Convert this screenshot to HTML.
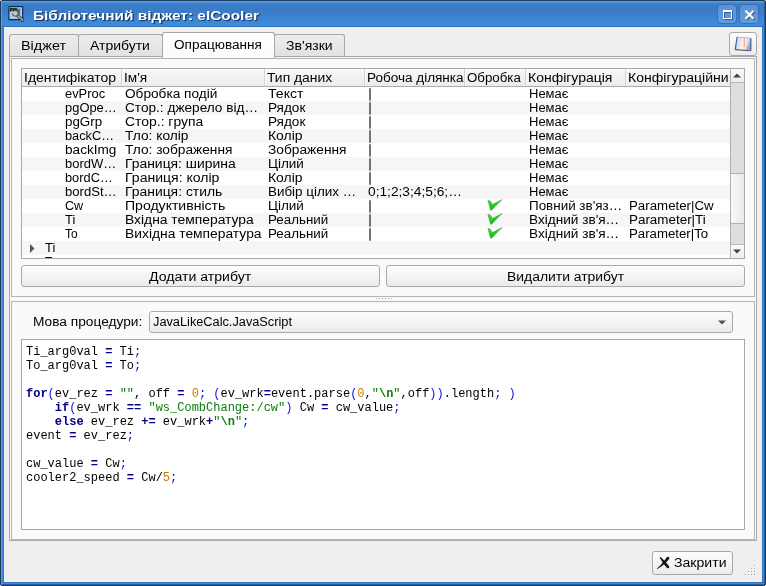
<!DOCTYPE html><html><head><meta charset="utf-8"><style>
html,body{margin:0;padding:0;width:766px;height:586px;overflow:hidden;background:#efefef}
div,span,svg{position:absolute}
.t{font-family:"Liberation Sans",sans-serif;will-change:transform}
.m{font-family:"Liberation Mono",monospace;font-size:12px;line-height:14px;white-space:pre;will-change:transform}
.m span{position:static}
</style></head><body>
<div style="left:0px;top:0px;width:766px;height:586px;background:#efefef"></div>
<div style="left:0px;top:0px;width:766px;height:27px;background:linear-gradient(#1a3a60 0,#1a3a60 1px,#5d9fe6 1px,#5d9fe6 2px,#4a8dd8 2px,#3a7bc6 5px,#3a7cc8 12px,#3e88d8 20px,#3f8ad9 26px,#2f72c0 26px,#2f72c0 27px)"></div>
<div style="left:0px;top:0px;width:4px;height:586px;background:linear-gradient(90deg,#1a3a60 0,#1a3a60 1px,#5c9de6 1px,#5c9de6 2px,transparent 2px)"></div>
<div style="left:2px;top:27px;width:2px;height:556px;background:linear-gradient(90deg,#3b86d9 0,#3b86d9 1px,#3079c9 1px)"></div>
<div style="left:762px;top:0px;width:4px;height:586px;background:linear-gradient(90deg,transparent 0,transparent 2px,#2a5c98 2px,#2a5c98 3px,#1a3a60 3px)"></div>
<div style="left:762px;top:27px;width:2px;height:556px;background:linear-gradient(90deg,#2f78c8 0,#2f78c8 1px,#3e8ee0 1px)"></div>
<div style="left:2px;top:582px;width:762px;height:3px;background:linear-gradient(#2f78c8 0,#2f78c8 1px,#3e8ee0 1px,#3e8ee0 2px,#2a5c98 2px)"></div>
<div style="left:0px;top:585px;width:766px;height:1px;background:#1a3a60"></div>
<div style="left:4px;top:27px;width:758px;height:555px;border:1px solid #f4f0ec;box-sizing:border-box"></div>
<div style="left:0px;top:0px;width:1px;height:1px;background:#c8c8c8"></div>
<div style="left:765px;top:0px;width:1px;height:1px;background:#c8c8c8"></div>
<div style="left:0px;top:585px;width:1px;height:1px;background:#f0f0f0"></div>
<div style="left:765px;top:585px;width:1px;height:1px;background:#f0f0f0"></div>
<svg style="position:absolute;left:8px;top:6px" width="17" height="17" viewBox="0 0 17 17">
<rect x="0.9" y="0.7" width="13.8" height="13" rx="0.8" fill="#a9ccf7" stroke="#132848" stroke-width="1.2"/>
<rect x="8.6" y="2.6" width="3.6" height="6" fill="#5c6f86"/>
<rect x="1.8" y="2.0" width="7" height="3.4" fill="#0a160a"/>
<rect x="2.3" y="2.7" width="6" height="0.8" fill="#2aa82a"/>
<rect x="2.3" y="3.9" width="6" height="0.7" fill="#1b6e1b"/>
<rect x="1.5" y="9" width="12.6" height="1.1" fill="#d6d640"/>
<path d="M9.6 9.6 L14.6 14.2" stroke="#2e2e2e" stroke-width="3.3" stroke-linecap="round"/>
<path d="M9.6 9.6 L14.6 14.2" stroke="#a6a6a6" stroke-width="1.8" stroke-linecap="round"/>
<circle cx="7.3" cy="7.3" r="2.9" fill="#c4c4c4" stroke="#3a3a3a" stroke-width="0.9"/>
<path d="M4.0 4.6 L7.0 7.1 L5.6 8.5 L3.4 6.0 Z" fill="#a9ccf7"/>
</svg>
<span class="t" style="left:33.00px;top:9px;font-size:13px;line-height:13px;color:#ffffff;transform:scaleX(1.1849);transform-origin:0 0;white-space:pre;font-weight:bold;text-shadow:1px 1px 1px rgba(10,30,60,0.85);">Бібліотечний віджет: elCooler</span>
<div style="left:717px;top:4px;width:20px;height:20px;background:linear-gradient(#5a93d3,#629cdb);border:1px solid #3a6fb3;border-radius:4px;box-sizing:border-box"></div>
<div style="left:739px;top:4px;width:20px;height:20px;background:linear-gradient(#5a93d3,#629cdb);border:1px solid #3a6fb3;border-radius:4px;box-sizing:border-box"></div>
<div style="left:724px;top:11px;width:9px;height:9px;border:1px solid #234f85;border-top-width:2px;box-sizing:border-box;opacity:0.8"></div>
<div style="left:723px;top:10px;width:9px;height:9px;border:1px solid #fff;border-top-width:2px;box-sizing:border-box"></div>
<svg style="position:absolute;left:739px;top:4px" width="20" height="20"><path d="M6.5 6.8 L14.5 14.8 M14.5 6.8 L6.5 14.8" stroke="#244c80" stroke-width="2.1" transform="translate(1,1)" opacity="0.85"/><path d="M6.5 6.8 L14.5 14.8 M14.5 6.8 L6.5 14.8" stroke="#fff" stroke-width="2.1"/></svg>
<div style="left:9px;top:56px;width:748px;height:485px;background:#fafafa;border:1px solid #a8a8a8;box-sizing:border-box"></div>
<div style="left:9px;top:34px;width:70px;height:22px;background:linear-gradient(#ececec,#e2e2e2);border:1px solid #a8a8a8;border-bottom:none;border-radius:3px 3px 0 0;box-sizing:border-box"></div>
<span class="t" style="left:20.98px;top:40px;font-size:12px;line-height:12px;color:#000;transform:scaleX(1.2018);transform-origin:0 0;white-space:pre;">Віджет</span>
<div style="left:78px;top:34px;width:85px;height:22px;background:linear-gradient(#ececec,#e2e2e2);border:1px solid #a8a8a8;border-bottom:none;border-radius:3px 3px 0 0;box-sizing:border-box"></div>
<span class="t" style="left:89.85px;top:40px;font-size:12px;line-height:12px;color:#000;transform:scaleX(1.1650);transform-origin:0 0;white-space:pre;">Атрибути</span>
<div style="left:274px;top:34px;width:71px;height:22px;background:linear-gradient(#ececec,#e2e2e2);border:1px solid #a8a8a8;border-bottom:none;border-radius:3px 3px 0 0;box-sizing:border-box"></div>
<span class="t" style="left:286.15px;top:40px;font-size:12px;line-height:12px;color:#000;transform:scaleX(1.1712);transform-origin:0 0;white-space:pre;">Зв'язки</span>
<div style="left:162px;top:32px;width:113px;height:27px;background:linear-gradient(#ffffff,#fafafa);border:1px solid #a8a8a8;border-bottom:none;border-radius:3px 3px 0 0;box-sizing:border-box"></div>
<span class="t" style="left:173.55px;top:39px;font-size:12px;line-height:12px;color:#000;transform:scaleX(1.1313);transform-origin:0 0;white-space:pre;">Опрацювання</span>
<div style="left:729px;top:32px;width:28px;height:24px;background:linear-gradient(#fdfdfd,#ececec);border:1px solid #aaaaaa;border-radius:3px;box-sizing:border-box"></div>
<svg style="position:absolute;left:734px;top:36px" width="18" height="16" viewBox="0 0 18 16">
<defs><linearGradient id="bk" x1="0" y1="0" x2="1" y2="0.3"><stop offset="0" stop-color="#ffffff"/><stop offset="0.35" stop-color="#dcdcdc"/><stop offset="0.55" stop-color="#f6f6f6"/><stop offset="0.8" stop-color="#e8e8e8"/><stop offset="1" stop-color="#a8a8a8"/></linearGradient></defs>
<path d="M3.2 1 L16.8 2.2 L16.8 14.8 L1.2 13.6 Z" fill="url(#bk)"/>
<path d="M3.2 1 L16.8 2.2" stroke="#b8b8b8" stroke-width="0.9"/>
<path d="M1.2 13.6 L16.8 14.8" stroke="#5a5a5a" stroke-width="1.1"/>
<path d="M3.2 1 L1.2 13.6" stroke="#3b64b4" stroke-width="1.3"/>
<path d="M16.8 2.2 L16.8 14.8" stroke="#3b64b4" stroke-width="1.3"/>
<path d="M10.2 1.6 L10.2 11" stroke="#ff8a8a" stroke-width="1"/>
</svg>
<div style="left:11px;top:58px;width:744px;height:239px;border:1px solid #b4b4b4;box-sizing:border-box"></div>
<div style="left:11px;top:301px;width:744px;height:239px;border:1px solid #b4b4b4;box-sizing:border-box"></div>
<div style="left:376px;top:298px;width:1px;height:1px;background:#a0a0a0"></div>
<div style="left:379px;top:298px;width:1px;height:1px;background:#a0a0a0"></div>
<div style="left:382px;top:298px;width:1px;height:1px;background:#a0a0a0"></div>
<div style="left:385px;top:298px;width:1px;height:1px;background:#a0a0a0"></div>
<div style="left:388px;top:298px;width:1px;height:1px;background:#a0a0a0"></div>
<div style="left:391px;top:298px;width:1px;height:1px;background:#a0a0a0"></div>
<div style="left:21px;top:68px;width:724px;height:191px;background:#fff;border:1px solid #a8a8a8;box-sizing:border-box"></div>
<div style="left:22px;top:69px;width:708px;height:18px;background:linear-gradient(#fcfcfc 0,#f5f5f5 3px,#ececec 17px);border-bottom:1px solid #aaaaaa;box-sizing:border-box"></div>
<div style="left:121px;top:69px;width:1px;height:17px;background:#d2d2d2"></div>
<div style="left:122px;top:69px;width:1px;height:17px;background:#fafafa"></div>
<div style="left:264px;top:69px;width:1px;height:17px;background:#d2d2d2"></div>
<div style="left:265px;top:69px;width:1px;height:17px;background:#fafafa"></div>
<div style="left:364px;top:69px;width:1px;height:17px;background:#d2d2d2"></div>
<div style="left:365px;top:69px;width:1px;height:17px;background:#fafafa"></div>
<div style="left:464px;top:69px;width:1px;height:17px;background:#d2d2d2"></div>
<div style="left:465px;top:69px;width:1px;height:17px;background:#fafafa"></div>
<div style="left:525px;top:69px;width:1px;height:17px;background:#d2d2d2"></div>
<div style="left:526px;top:69px;width:1px;height:17px;background:#fafafa"></div>
<div style="left:625px;top:69px;width:1px;height:17px;background:#d2d2d2"></div>
<div style="left:626px;top:69px;width:1px;height:17px;background:#fafafa"></div>
<div style="left:22px;top:69px;width:708px;height:18px;overflow:hidden">
<span class="t" style="left:2.00px;top:3px;font-size:12px;line-height:12px;color:#000;transform:scaleX(1.1648);transform-origin:0 0;white-space:pre;">Ідентифікатор</span>
<span class="t" style="left:102.00px;top:3px;font-size:12px;line-height:12px;color:#000;transform:scaleX(1.1342);transform-origin:0 0;white-space:pre;">Ім'я</span>
<span class="t" style="left:245.00px;top:3px;font-size:12px;line-height:12px;color:#000;transform:scaleX(1.1573);transform-origin:0 0;white-space:pre;">Тип даних</span>
<span class="t" style="left:345.00px;top:3px;font-size:12px;line-height:12px;color:#000;transform:scaleX(1.1273);transform-origin:0 0;white-space:pre;">Робоча ділянка</span>
<span class="t" style="left:445.00px;top:3px;font-size:12px;line-height:12px;color:#000;transform:scaleX(1.1077);transform-origin:0 0;white-space:pre;">Обробка</span>
<span class="t" style="left:506.00px;top:3px;font-size:12px;line-height:12px;color:#000;transform:scaleX(1.1652);transform-origin:0 0;white-space:pre;">Конфігурація</span>
<span class="t" style="left:606.00px;top:3px;font-size:12px;line-height:12px;color:#000;transform:scaleX(1.1705);transform-origin:0 0;white-space:pre;">Конфігураційни</span>
</div>
<div style="left:22px;top:87px;width:708px;height:171px;overflow:hidden">
<div style="left:0px;top:14px;width:708px;height:14px;background:#f6f6f6"></div>
<div style="left:0px;top:42px;width:708px;height:14px;background:#f6f6f6"></div>
<div style="left:0px;top:70px;width:708px;height:14px;background:#f6f6f6"></div>
<div style="left:0px;top:98px;width:708px;height:14px;background:#f6f6f6"></div>
<div style="left:0px;top:126px;width:708px;height:14px;background:#f6f6f6"></div>
<div style="left:0px;top:154px;width:708px;height:14px;background:#f6f6f6"></div>
<span class="t" style="left:43.00px;top:1px;font-size:12px;line-height:12px;color:#000;transform:scaleX(1.0749);transform-origin:0 0;white-space:pre;">evProc</span>
<span class="t" style="left:103.00px;top:1px;font-size:12px;line-height:12px;color:#000;transform:scaleX(1.1360);transform-origin:0 0;white-space:pre;">Обробка подій</span>
<span class="t" style="left:246.00px;top:1px;font-size:12px;line-height:12px;color:#000;transform:scaleX(1.1763);transform-origin:0 0;white-space:pre;">Текст</span>
<div style="left:347px;top:1px;width:2px;height:13px;background:#747474;border-radius:1px"></div>
<span class="t" style="left:507.00px;top:1px;font-size:12px;line-height:12px;color:#000;transform:scaleX(1.0833);transform-origin:0 0;white-space:pre;">Немає</span>
<span class="t" style="left:43.00px;top:15px;font-size:12px;line-height:12px;color:#000;transform:scaleX(1.0771);transform-origin:0 0;white-space:pre;">pgOpe…</span>
<span class="t" style="left:103.00px;top:15px;font-size:12px;line-height:12px;color:#000;transform:scaleX(1.1352);transform-origin:0 0;white-space:pre;">Стор.: джерело від…</span>
<span class="t" style="left:246.00px;top:15px;font-size:12px;line-height:12px;color:#000;transform:scaleX(1.1306);transform-origin:0 0;white-space:pre;">Рядок</span>
<div style="left:347px;top:15px;width:2px;height:13px;background:#747474;border-radius:1px"></div>
<span class="t" style="left:507.00px;top:15px;font-size:12px;line-height:12px;color:#000;transform:scaleX(1.0833);transform-origin:0 0;white-space:pre;">Немає</span>
<span class="t" style="left:43.00px;top:29px;font-size:12px;line-height:12px;color:#000;transform:scaleX(1.1129);transform-origin:0 0;white-space:pre;">pgGrp</span>
<span class="t" style="left:103.00px;top:29px;font-size:12px;line-height:12px;color:#000;transform:scaleX(1.1603);transform-origin:0 0;white-space:pre;">Стор.: група</span>
<span class="t" style="left:246.00px;top:29px;font-size:12px;line-height:12px;color:#000;transform:scaleX(1.1306);transform-origin:0 0;white-space:pre;">Рядок</span>
<div style="left:347px;top:29px;width:2px;height:13px;background:#747474;border-radius:1px"></div>
<span class="t" style="left:507.00px;top:29px;font-size:12px;line-height:12px;color:#000;transform:scaleX(1.0833);transform-origin:0 0;white-space:pre;">Немає</span>
<span class="t" style="left:43.00px;top:43px;font-size:12px;line-height:12px;color:#000;transform:scaleX(1.0628);transform-origin:0 0;white-space:pre;">backC…</span>
<span class="t" style="left:103.00px;top:43px;font-size:12px;line-height:12px;color:#000;transform:scaleX(1.1447);transform-origin:0 0;white-space:pre;">Тло: колір</span>
<span class="t" style="left:246.00px;top:43px;font-size:12px;line-height:12px;color:#000;transform:scaleX(1.1597);transform-origin:0 0;white-space:pre;">Колір</span>
<div style="left:347px;top:43px;width:2px;height:13px;background:#747474;border-radius:1px"></div>
<span class="t" style="left:507.00px;top:43px;font-size:12px;line-height:12px;color:#000;transform:scaleX(1.0833);transform-origin:0 0;white-space:pre;">Немає</span>
<span class="t" style="left:43.00px;top:57px;font-size:12px;line-height:12px;color:#000;transform:scaleX(1.1334);transform-origin:0 0;white-space:pre;">backImg</span>
<span class="t" style="left:103.00px;top:57px;font-size:12px;line-height:12px;color:#000;transform:scaleX(1.1432);transform-origin:0 0;white-space:pre;">Тло: зображення</span>
<span class="t" style="left:246.00px;top:57px;font-size:12px;line-height:12px;color:#000;transform:scaleX(1.1449);transform-origin:0 0;white-space:pre;">Зображення</span>
<div style="left:347px;top:57px;width:2px;height:13px;background:#747474;border-radius:1px"></div>
<span class="t" style="left:507.00px;top:57px;font-size:12px;line-height:12px;color:#000;transform:scaleX(1.0833);transform-origin:0 0;white-space:pre;">Немає</span>
<span class="t" style="left:43.00px;top:71px;font-size:12px;line-height:12px;color:#000;transform:scaleX(1.0812);transform-origin:0 0;white-space:pre;">bordW…</span>
<span class="t" style="left:103.00px;top:71px;font-size:12px;line-height:12px;color:#000;transform:scaleX(1.1577);transform-origin:0 0;white-space:pre;">Границя: ширина</span>
<span class="t" style="left:246.00px;top:71px;font-size:12px;line-height:12px;color:#000;transform:scaleX(1.1237);transform-origin:0 0;white-space:pre;">Цілий</span>
<div style="left:347px;top:71px;width:2px;height:13px;background:#747474;border-radius:1px"></div>
<span class="t" style="left:507.00px;top:71px;font-size:12px;line-height:12px;color:#000;transform:scaleX(1.0833);transform-origin:0 0;white-space:pre;">Немає</span>
<span class="t" style="left:43.00px;top:85px;font-size:12px;line-height:12px;color:#000;transform:scaleX(1.0675);transform-origin:0 0;white-space:pre;">bordC…</span>
<span class="t" style="left:103.00px;top:85px;font-size:12px;line-height:12px;color:#000;transform:scaleX(1.1702);transform-origin:0 0;white-space:pre;">Границя: колір</span>
<span class="t" style="left:246.00px;top:85px;font-size:12px;line-height:12px;color:#000;transform:scaleX(1.1597);transform-origin:0 0;white-space:pre;">Колір</span>
<div style="left:347px;top:85px;width:2px;height:13px;background:#747474;border-radius:1px"></div>
<span class="t" style="left:507.00px;top:85px;font-size:12px;line-height:12px;color:#000;transform:scaleX(1.0833);transform-origin:0 0;white-space:pre;">Немає</span>
<span class="t" style="left:43.00px;top:99px;font-size:12px;line-height:12px;color:#000;transform:scaleX(1.0911);transform-origin:0 0;white-space:pre;">bordSt…</span>
<span class="t" style="left:103.00px;top:99px;font-size:12px;line-height:12px;color:#000;transform:scaleX(1.1587);transform-origin:0 0;white-space:pre;">Границя: стиль</span>
<span class="t" style="left:246.00px;top:99px;font-size:12px;line-height:12px;color:#000;transform:scaleX(1.1175);transform-origin:0 0;white-space:pre;">Вибір цілих …</span>
<span class="t" style="left:346.00px;top:99px;font-size:12px;line-height:12px;color:#000;transform:scaleX(1.1441);transform-origin:0 0;white-space:pre;">0;1;2;3;4;5;6;…</span>
<span class="t" style="left:507.00px;top:99px;font-size:12px;line-height:12px;color:#000;transform:scaleX(1.0833);transform-origin:0 0;white-space:pre;">Немає</span>
<span class="t" style="left:43.00px;top:113px;font-size:12px;line-height:12px;color:#000;transform:scaleX(1.0486);transform-origin:0 0;white-space:pre;">Cw</span>
<span class="t" style="left:103.00px;top:113px;font-size:12px;line-height:12px;color:#000;transform:scaleX(1.1706);transform-origin:0 0;white-space:pre;">Продуктивність</span>
<span class="t" style="left:246.00px;top:113px;font-size:12px;line-height:12px;color:#000;transform:scaleX(1.1237);transform-origin:0 0;white-space:pre;">Цілий</span>
<div style="left:347px;top:113px;width:2px;height:13px;background:#747474;border-radius:1px"></div>
<svg style="position:absolute;left:465px;top:112px" width="16" height="14" viewBox="0 0 16 14"><defs><linearGradient id="cg8" x1="0" y1="0" x2="0.3" y2="1"><stop offset="0" stop-color="#4af04a"/><stop offset="1" stop-color="#14b014"/></linearGradient></defs><path d="M0.9 1.5 L3.2 2.0 L5.5 5.6 L15 0.6 L4.4 11.3 L3.7 11.2 Z" fill="url(#cg8)" stroke="#138f13" stroke-width="0.45" stroke-linejoin="round"/></svg>
<span class="t" style="left:507.00px;top:113px;font-size:12px;line-height:12px;color:#000;transform:scaleX(1.1183);transform-origin:0 0;white-space:pre;">Повний зв'яз…</span>
<span class="t" style="left:607.00px;top:113px;font-size:12px;line-height:12px;color:#000;transform:scaleX(1.1075);transform-origin:0 0;white-space:pre;">Parameter|Cw</span>
<span class="t" style="left:43.00px;top:127px;font-size:12px;line-height:12px;color:#000;transform:scaleX(1.0752);transform-origin:0 0;white-space:pre;">Ti</span>
<span class="t" style="left:103.00px;top:127px;font-size:12px;line-height:12px;color:#000;transform:scaleX(1.1540);transform-origin:0 0;white-space:pre;">Вхідна температура</span>
<span class="t" style="left:246.00px;top:127px;font-size:12px;line-height:12px;color:#000;transform:scaleX(1.1124);transform-origin:0 0;white-space:pre;">Реальний</span>
<div style="left:347px;top:127px;width:2px;height:13px;background:#747474;border-radius:1px"></div>
<svg style="position:absolute;left:465px;top:126px" width="16" height="14" viewBox="0 0 16 14"><defs><linearGradient id="cg9" x1="0" y1="0" x2="0.3" y2="1"><stop offset="0" stop-color="#4af04a"/><stop offset="1" stop-color="#14b014"/></linearGradient></defs><path d="M0.9 1.5 L3.2 2.0 L5.5 5.6 L15 0.6 L4.4 11.3 L3.7 11.2 Z" fill="url(#cg9)" stroke="#138f13" stroke-width="0.45" stroke-linejoin="round"/></svg>
<span class="t" style="left:507.00px;top:127px;font-size:12px;line-height:12px;color:#000;transform:scaleX(1.1335);transform-origin:0 0;white-space:pre;">Вхідний зв'я…</span>
<span class="t" style="left:607.00px;top:127px;font-size:12px;line-height:12px;color:#000;transform:scaleX(1.1178);transform-origin:0 0;white-space:pre;">Parameter|Ti</span>
<span class="t" style="left:43.00px;top:141px;font-size:12px;line-height:12px;color:#000;transform:scaleX(0.9975);transform-origin:0 0;white-space:pre;">To</span>
<span class="t" style="left:103.00px;top:141px;font-size:12px;line-height:12px;color:#000;transform:scaleX(1.1531);transform-origin:0 0;white-space:pre;">Вихідна температура</span>
<span class="t" style="left:246.00px;top:141px;font-size:12px;line-height:12px;color:#000;transform:scaleX(1.1124);transform-origin:0 0;white-space:pre;">Реальний</span>
<div style="left:347px;top:141px;width:2px;height:13px;background:#747474;border-radius:1px"></div>
<svg style="position:absolute;left:465px;top:140px" width="16" height="14" viewBox="0 0 16 14"><defs><linearGradient id="cg10" x1="0" y1="0" x2="0.3" y2="1"><stop offset="0" stop-color="#4af04a"/><stop offset="1" stop-color="#14b014"/></linearGradient></defs><path d="M0.9 1.5 L3.2 2.0 L5.5 5.6 L15 0.6 L4.4 11.3 L3.7 11.2 Z" fill="url(#cg10)" stroke="#138f13" stroke-width="0.45" stroke-linejoin="round"/></svg>
<span class="t" style="left:507.00px;top:141px;font-size:12px;line-height:12px;color:#000;transform:scaleX(1.1335);transform-origin:0 0;white-space:pre;">Вхідний зв'я…</span>
<span class="t" style="left:607.00px;top:141px;font-size:12px;line-height:12px;color:#000;transform:scaleX(1.1023);transform-origin:0 0;white-space:pre;">Parameter|To</span>
<svg style="position:absolute;left:8px;top:157px" width="5" height="9"><path d="M0 0 L4.5 4.5 L0 9 Z" fill="#555"/></svg>
<span class="t" style="left:23.00px;top:155px;font-size:12px;line-height:12px;color:#000;transform:scaleX(1.0752);transform-origin:0 0;white-space:pre;">Ti</span>
<span class="t" style="left:23.00px;top:169px;font-size:12px;line-height:12px;color:#000;transform:scaleX(1.0000);transform-origin:0 0;white-space:pre;">T</span>
</div>
<div style="left:730px;top:69px;width:14px;height:189px;background:#dedede;border-left:1px solid #b0b0b0;box-sizing:border-box"></div>
<div style="left:730px;top:69px;width:14px;height:14px;background:linear-gradient(#fafafa,#ededed);border-left:1px solid #b0b0b0;border-bottom:1px solid #b8b8b8;box-sizing:border-box"></div>
<svg style="position:absolute;left:733px;top:73px" width="8" height="5"><path d="M0 4.5 L4 0.5 L8 4.5 Z" fill="#444"/></svg>
<div style="left:730px;top:173px;width:14px;height:51px;background:linear-gradient(90deg,#f8f8f8,#eaeaea);border:1px solid #b0b0b0;border-right:none;box-sizing:border-box"></div>
<div style="left:730px;top:244px;width:14px;height:14px;background:linear-gradient(#fafafa,#ededed);border-left:1px solid #b0b0b0;border-top:1px solid #b8b8b8;box-sizing:border-box"></div>
<svg style="position:absolute;left:733px;top:249px" width="8" height="5"><path d="M0 0.5 L4 4.5 L8 0.5 Z" fill="#444"/></svg>
<div style="left:21px;top:265px;width:359px;height:22px;background:linear-gradient(#fdfdfd,#ebebeb);border:1px solid #a8a8a8;border-radius:3px;box-sizing:border-box"></div>
<span class="t" style="left:149.38px;top:271px;font-size:12px;line-height:12px;color:#000;transform:scaleX(1.1751);transform-origin:0 0;white-space:pre;">Додати атрибут</span>
<div style="left:386px;top:265px;width:359px;height:22px;background:linear-gradient(#fdfdfd,#ebebeb);border:1px solid #a8a8a8;border-radius:3px;box-sizing:border-box"></div>
<span class="t" style="left:506.99px;top:271px;font-size:12px;line-height:12px;color:#000;transform:scaleX(1.1586);transform-origin:0 0;white-space:pre;">Видалити атрибут</span>
<span class="t" style="left:33.00px;top:316px;font-size:12px;line-height:12px;color:#000;transform:scaleX(1.1424);transform-origin:0 0;white-space:pre;">Мова процедури:</span>
<div style="left:149px;top:311px;width:584px;height:22px;background:linear-gradient(#fdfdfd,#ebebeb);border:1px solid #a8a8a8;border-radius:3px;box-sizing:border-box"></div>
<span class="t" style="left:153.00px;top:316px;font-size:12px;line-height:12px;color:#000;transform:scaleX(1.0631);transform-origin:0 0;white-space:pre;">JavaLikeCalc.JavaScript</span>
<svg style="position:absolute;left:718px;top:320px" width="8" height="5"><path d="M0 0.5 L4 4.5 L8 0.5 Z" fill="#505050"/></svg>
<div style="left:21px;top:339px;width:724px;height:191px;background:#fff;border:1px solid #a8a8a8;box-sizing:border-box"></div>
<span class="m" style="left:26px;top:345px;"><span style="color:#000;">Ti_arg0val </span><span style="color:#000080;font-weight:bold;">=</span><span style="color:#000;"> Ti</span><span style="color:#1010e8;">;</span></span>
<span class="m" style="left:26px;top:359px;"><span style="color:#000;">To_arg0val </span><span style="color:#000080;font-weight:bold;">=</span><span style="color:#000;"> To</span><span style="color:#1010e8;">;</span></span>
<span class="m" style="left:26px;top:387px;"><span style="color:#000080;font-weight:bold;">for</span><span style="color:#1010e8;">(</span><span style="color:#000;">ev_rez </span><span style="color:#000080;font-weight:bold;">=</span><span style="color:#000;"> </span><span style="color:#0a800a;">""</span><span style="color:#000;">, off </span><span style="color:#000080;font-weight:bold;">=</span><span style="color:#000;"> </span><span style="color:#c88000;">0</span><span style="color:#1010e8;">; </span><span style="color:#1010e8;">(</span><span style="color:#000;">ev_wrk</span><span style="color:#000080;font-weight:bold;">=</span><span style="color:#000;">event.parse</span><span style="color:#1010e8;">(</span><span style="color:#c88000;">0</span><span style="color:#000;">,</span><span style="color:#0a800a;">"</span><span style="color:#0a800a;font-weight:bold;">\n</span><span style="color:#0a800a;">"</span><span style="color:#000;">,off</span><span style="color:#1010e8;">))</span><span style="color:#000;">.length</span><span style="color:#1010e8;">; )</span></span>
<span class="m" style="left:26px;top:401px;"><span style="color:#000;">    </span><span style="color:#000080;font-weight:bold;">if</span><span style="color:#1010e8;">(</span><span style="color:#000;">ev_wrk </span><span style="color:#000080;font-weight:bold;">==</span><span style="color:#000;"> </span><span style="color:#0a800a;">"ws_CombChange:/cw"</span><span style="color:#1010e8;">) </span><span style="color:#000;">Cw </span><span style="color:#000080;font-weight:bold;">=</span><span style="color:#000;"> cw_value</span><span style="color:#1010e8;">;</span></span>
<span class="m" style="left:26px;top:415px;"><span style="color:#000;">    </span><span style="color:#000080;font-weight:bold;">else</span><span style="color:#000;"> ev_rez </span><span style="color:#000080;font-weight:bold;">+=</span><span style="color:#000;"> ev_wrk</span><span style="color:#000080;font-weight:bold;">+</span><span style="color:#0a800a;">"</span><span style="color:#0a800a;font-weight:bold;">\n</span><span style="color:#0a800a;">"</span><span style="color:#1010e8;">;</span></span>
<span class="m" style="left:26px;top:429px;"><span style="color:#000;">event </span><span style="color:#000080;font-weight:bold;">=</span><span style="color:#000;"> ev_rez</span><span style="color:#1010e8;">;</span></span>
<span class="m" style="left:26px;top:457px;"><span style="color:#000;">cw_value </span><span style="color:#000080;font-weight:bold;">=</span><span style="color:#000;"> Cw</span><span style="color:#1010e8;">;</span></span>
<span class="m" style="left:26px;top:471px;"><span style="color:#000;">cooler2_speed </span><span style="color:#000080;font-weight:bold;">=</span><span style="color:#000;"> Cw/</span><span style="color:#c88000;">5</span><span style="color:#1010e8;">;</span></span>
<div style="left:652px;top:551px;width:81px;height:24px;background:linear-gradient(#fdfdfd,#ebebeb);border:1px solid #a8a8a8;border-radius:3px;box-sizing:border-box"></div>
<svg style="position:absolute;left:655px;top:555px" width="17" height="16" viewBox="0 0 17 16"><path d="M4.8 2.0 L5.9 2.2 L9.6 6.0 L13.6 10.4 Q14.6 12.2 14.0 13.0 Q13.0 13.9 11.6 12.6 L8.2 8.6 L4.9 3.0 Z" fill="#141414"/><path d="M12.0 2.0 Q13.6 1.3 14.3 2.4 Q14.6 3.6 13.8 4.4 L10.4 8.2 L6.2 11.6 L2.3 13.9 L1.7 13.7 L5.4 10.2 L8.6 6.4 L11.0 3.3 Z" fill="#141414"/></svg>
<span class="t" style="left:674.00px;top:557px;font-size:12px;line-height:12px;color:#000;transform:scaleX(1.1732);transform-origin:0 0;white-space:pre;">Закрити</span>
<div style="left:755px;top:566px;width:1px;height:1px;background:#ffffff"></div>
<div style="left:754px;top:565px;width:1px;height:1px;background:#a8a8a8"></div>
<div style="left:752px;top:569px;width:1px;height:1px;background:#ffffff"></div>
<div style="left:751px;top:568px;width:1px;height:1px;background:#a8a8a8"></div>
<div style="left:755px;top:569px;width:1px;height:1px;background:#ffffff"></div>
<div style="left:754px;top:568px;width:1px;height:1px;background:#a8a8a8"></div>
<div style="left:749px;top:572px;width:1px;height:1px;background:#ffffff"></div>
<div style="left:748px;top:571px;width:1px;height:1px;background:#a8a8a8"></div>
<div style="left:752px;top:572px;width:1px;height:1px;background:#ffffff"></div>
<div style="left:751px;top:571px;width:1px;height:1px;background:#a8a8a8"></div>
<div style="left:755px;top:572px;width:1px;height:1px;background:#ffffff"></div>
<div style="left:754px;top:571px;width:1px;height:1px;background:#a8a8a8"></div>
<div style="left:746px;top:575px;width:1px;height:1px;background:#ffffff"></div>
<div style="left:745px;top:574px;width:1px;height:1px;background:#a8a8a8"></div>
<div style="left:749px;top:575px;width:1px;height:1px;background:#ffffff"></div>
<div style="left:748px;top:574px;width:1px;height:1px;background:#a8a8a8"></div>
<div style="left:752px;top:575px;width:1px;height:1px;background:#ffffff"></div>
<div style="left:751px;top:574px;width:1px;height:1px;background:#a8a8a8"></div>
<div style="left:755px;top:575px;width:1px;height:1px;background:#ffffff"></div>
<div style="left:754px;top:574px;width:1px;height:1px;background:#a8a8a8"></div>
</body></html>
